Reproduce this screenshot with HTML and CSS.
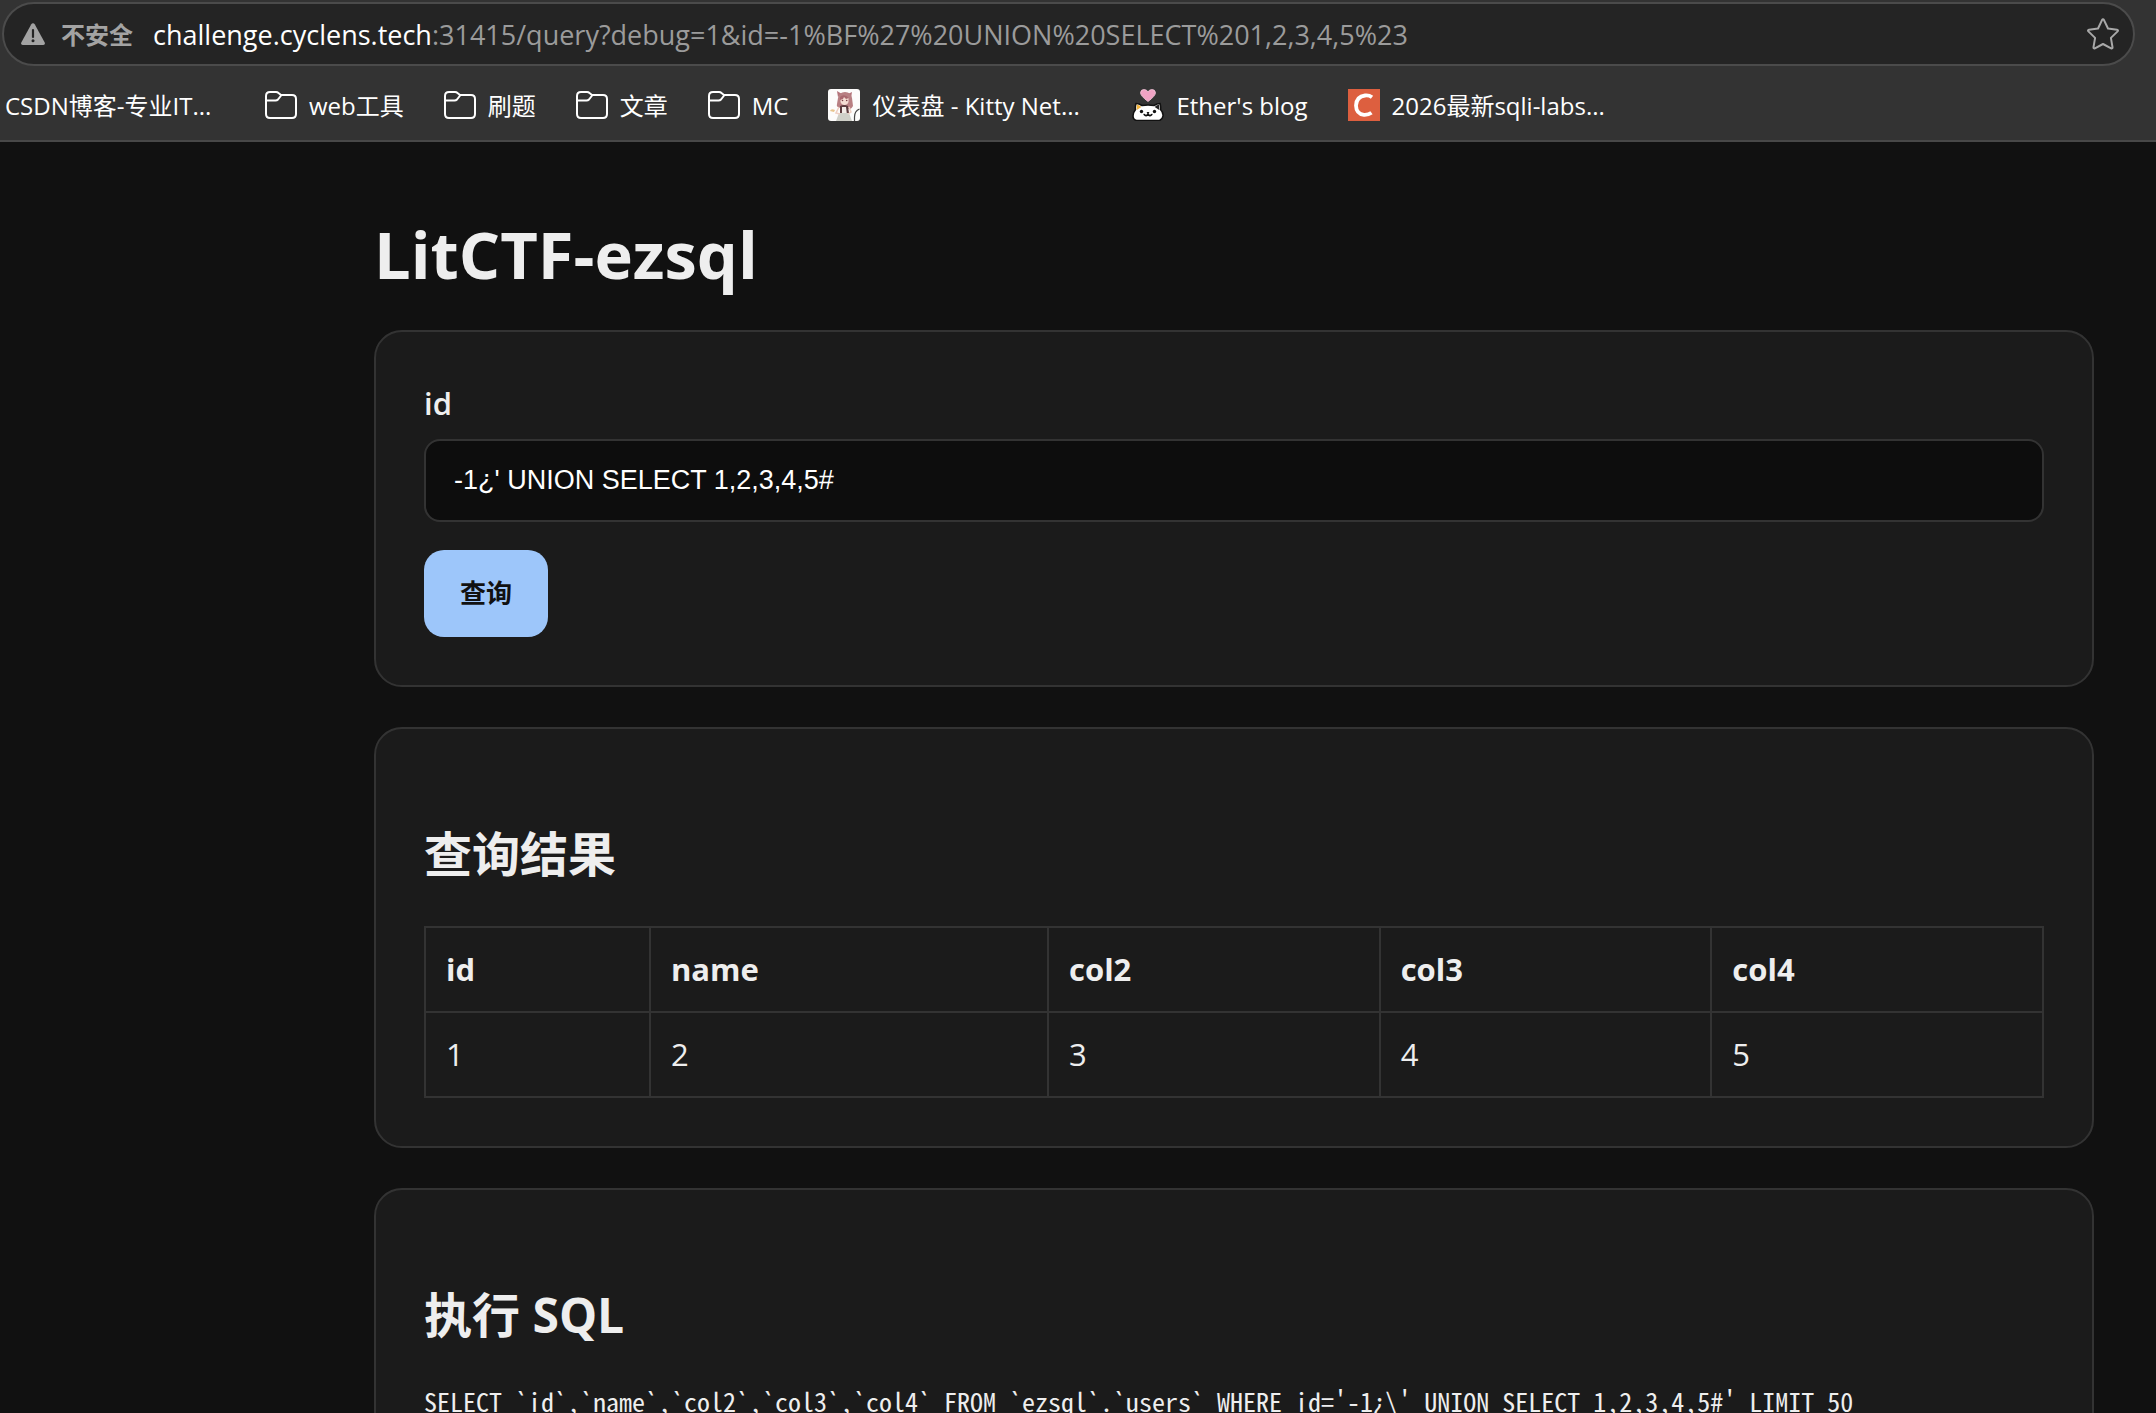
FILE: index.html
```html
<!DOCTYPE html>
<html lang="zh-CN">
<head>
  <meta charset="UTF-8" />
  <meta name="viewport" content="width=device-width, initial-scale=1.0"/>
  <title>LitCTF-ezsql</title>
  <link rel="stylesheet" href="styles.css">
</head>
<body>
  <header class="browser">
    <div class="omnibox">
      <button type="button" class="security">
        <svg class="warn" viewBox="0 0 24 22">
          <path d="M10.3 1.2a2 2 0 0 1 3.4 0l10 18.3a1.7 1.7 0 0 1-1.5 2.5H1.8a1.7 1.7 0 0 1-1.5-2.5z" fill="#a3a3a3"/>
          <path d="M12 7v7" stroke="#242424" stroke-width="2.2" stroke-linecap="round"/>
          <circle cx="12" cy="17.7" r="1.5" fill="#242424"/>
        </svg>
        <span>不安全</span>
      </button>
      <div class="url"><span class="host">challenge.cyclens.tech</span>:31415/query?debug=1&amp;id=-1%BF%27%20UNION%20SELECT%201,2,3,4,5%23</div>
      <button type="button" class="star" aria-label="收藏">
        <svg viewBox="0 0 32 32" fill="none" stroke="#a8a8a8" stroke-width="2" stroke-linejoin="round">
          <path d="M15 2.1q1-1.8 2 0l4 8.4 9 1.3q1.6.4.6 1.6l-6.700 6.500 1.600 9.300q.1 1.700-1.400 1.100L16 26l-8.100 4.300q-1.500.6-1.400-1.100l1.600-9.300-6.700-6.500q-1-1.200.6-1.600l9-1.300z"/>
        </svg>
      </button>
    </div>

    <nav class="bookmarks">
      <a href="#" class="bookmark"><span class="long">CSDN博客-专业IT...</span></a>
      <button type="button" class="bookmark">
        <svg class="icon" viewBox="0 0 32 32"><use href="#folder"/></svg>
        <span>web工具</span>
      </button>
      <button type="button" class="bookmark">
        <svg class="icon" viewBox="0 0 32 32"><use href="#folder"/></svg>
        <span>刷题</span>
      </button>
      <button type="button" class="bookmark">
        <svg class="icon" viewBox="0 0 32 32"><use href="#folder"/></svg>
        <span>文章</span>
      </button>
      <button type="button" class="bookmark">
        <svg class="icon" viewBox="0 0 32 32"><use href="#folder"/></svg>
        <span>MC</span>
      </button>
      <a href="#" class="bookmark">
        <svg class="icon" viewBox="0 0 32 32">
          <rect width="32" height="32" rx="3" fill="#fdfcfb"/>
          <path d="M10 8 9 2l5 3M20 5l4-2-1 6" fill="#b4737a"/>
          <path d="M10 9q1-6 7-6t7 6l1 8q-2 4-4 3l-9-1q-4-1-3-4z" fill="#b87f82"/>
          <path d="M12.500 9q4-3 8 0v4q-1 3-4 3t-4-3z" fill="#f5ddd3"/>
          <path d="M12 8q4-4 9 1l-3 1-2-2-1 2-3 1z" fill="#a9686e"/>
          <circle cx="14.500" cy="11.500" r=".8" fill="#7a3f45"/>
          <circle cx="18.700" cy="11.500" r=".8" fill="#7a3f45"/>
          <path d="M12 17q4-2 8 0l1 7-9 1z" fill="#5c3b3d"/>
          <path d="M14 18h4l1 8h-5z" fill="#f2ebe6"/>
          <path d="M11 24h10l3 8H8z" fill="#cfd0c8"/>
          <path d="m11 18-3 6 4 1M21 18l2 5-3 2" fill="none" stroke="#efcfc2" stroke-width="1.500"/>
          <path d="M2 22q1-3 5-1l-1 2z" fill="#e8c58e"/>
          <path d="M31.500 20q-5 2-5 8v4" fill="none" stroke="#444" stroke-width="1.200"/>
        </svg>
        <span class="long">仪表盘 - Kitty Net...</span>
      </a>
      <a href="#" class="bookmark">
        <svg class="icon" viewBox="0 0 32 32">
          <path d="M16 12.500Q8.500 7 8.500 3.600 9 .3 12.300.5 15 .7 16 3 17 .7 19.700.5q3.300-.2 3.800 3.100 0 3.400-7.500 8.900z" fill="#f0a3c4" stroke="#f7cadd" stroke-width=".8"/>
          <path d="M4 14.500q3 0 6 2 6-1 12 0 3-2 6-2 1 3 .5 6 3 3 2.500 6.500T27.500 31.500h-23Q1 30.500 1 27t2.500-6.500q-.5-3 .5-6z" fill="#fff" stroke="#111" stroke-width="1.600"/>
          <path d="M4.800 15.500q3 .5 4.500 2.500l-4.500 3z" fill="#f3b43c"/>
          <path d="M27.200 15.500q-3 .5-4.500 2.500l4.500 3z" fill="#222"/>
          <circle cx="9.500" cy="22.500" r="1.700" fill="#111"/>
          <circle cx="22.500" cy="22.500" r="1.700" fill="#111"/>
          <path d="M12.200 25.500q1.900 2.500 3.800-.5 1.900 3 3.800.5" fill="none" stroke="#111" stroke-width="1.600" stroke-linecap="round"/>
          <path d="M14.500 23h3L16 25z" fill="#111"/>
        </svg>
        <span>Ether's blog</span>
      </a>
      <a href="#" class="bookmark">
        <svg class="icon" viewBox="0 0 32 32">
          <rect width="32" height="32" fill="#dd5f3f"/>
          <path d="M24 8.300Q21 6 17 6.500 8.500 7.500 8 16.500q.2 8.500 8 9.300 4.500.2 7.500-2" fill="none" stroke="#fff" stroke-width="3.800"/>
        </svg>
        <span class="long">2026最新sqli-labs...</span>
      </a>
    </nav>
  </header>

  <main class="container">
    <h1>LitCTF-ezsql</h1>

    <form class="card" action="/query">
      <label for="id">id</label>
      <input type="text" id="id" name="id" value="-1¿' UNION SELECT 1,2,3,4,5#" />
      <button type="submit" class="btn">查询</button>
    </form>

    <section class="card">
      <h2>查询结果</h2>
      <table>
        <thead>
          <tr>
            <th class="col-id">id</th>
            <th class="col-name">name</th>
            <th>col2</th>
            <th>col3</th>
            <th>col4</th>
          </tr>
        </thead>
        <tbody>
          <tr>
            <td>1</td>
            <td>2</td>
            <td>3</td>
            <td>4</td>
            <td>5</td>
          </tr>
        </tbody>
      </table>
    </section>

    <section class="card">
      <h2>执行 SQL</h2>
      <pre>SELECT `id`,`name`,`col2`,`col3`,`col4` FROM `ezsql`.`users` WHERE id='-1¿\' UNION SELECT 1,2,3,4,5#' LIMIT 50</pre>
    </section>
  </main>

  <svg class="defs" aria-hidden="true">
    <symbol id="folder" viewBox="0 0 32 32">
      <path d="M1 25V7q0-4 4-4h6q1.500 0 2.500 1l2.500 2H27q4 0 4 4v15q0 4-4 4H5q-4 0-4-4zM1 11.500h9.500q1.500 0 2.500-1L16.500 6" fill="none" stroke="#fff" stroke-width="2" stroke-linejoin="round"/>
    </symbol>
  </svg>
</body>
</html>
```

FILE: styles.css
```css
* {
  box-sizing: border-box;
  margin: 0;
  padding: 0;
}

body {
  height: 100vh;
  overflow: hidden;
  background: #111;
  color: #eee;
  font-family: 'Open Sans', 'Noto Sans CJK SC', sans-serif;
  font-size: 31px;
  line-height: 47px;
}

button {
  border: none;
  background: none;
  color: inherit;
  font: inherit;
  cursor: pointer;
}

/* browser bar */
.browser {
  background: #333;
  border-bottom: 2px solid #484848;
  padding-top: 2px;
}

.omnibox {
  display: flex;
  align-items: center;
  height: 64px;
  margin: 0 21px 0 2px;
  padding: 0 14px 0 17px;
  background: #242424;
  border: 2px solid #4b4b4b;
  border-radius: 32px;
}

.security {
  display: flex;
  align-items: center;
  gap: 16px;
  margin-right: 20px;
  color: #a3a3a3;
  font-size: 24px;
  font-weight: bold;
}

.warn {
  width: 24px;
  height: 22px;
}

.url {
  flex: 1;
  color: #9b9b9b;
  font-size: 27px;
  white-space: nowrap;
}

.host {
  color: #fff;
}

.star,
.star svg {
  display: block;
  width: 32px;
  height: 32px;
}

.bookmarks {
  display: flex;
  align-items: center;
  gap: 40px;
  height: 74px;
  padding: 4px 5px 0;
}

.bookmark {
  display: flex;
  align-items: center;
  gap: 12px;
  color: #fff;
  font-size: 24px;
  text-decoration: none;
  white-space: nowrap;
}

.long {
  width: 220px;
}

.icon {
  width: 32px;
  height: 32px;
}

.defs {
  display: none;
}

/* page */
.container {
  margin: 0 62px 0 374px;
  padding-top: 66px;
}

h1 {
  margin-bottom: 30px;
  font-size: 65px;
  line-height: 92px;
}

.card {
  margin-bottom: 40px;
  padding: 48px;
  background: #1b1b1b;
  border: 2px solid #333;
  border-radius: 28px;
}

label {
  display: block;
  margin-bottom: 12px;
  font-weight: 600;
}

input {
  display: block;
  width: 100%;
  height: 83px;
  margin-bottom: 28px;
  padding: 0 28px;
  background: #0d0d0d;
  border: 2px solid #333;
  border-radius: 16px;
  color: #fff;
  font-family: 'Liberation Sans', Arial, sans-serif;
  font-size: 27px;
}

.btn {
  display: block;
  padding: 20px 36px;
  background: #9dc6fa;
  border-radius: 20px;
  color: #111;
  font-size: 26px;
  font-weight: bold;
}

h2 {
  margin: 42px 0 37px;
  font-size: 48px;
  line-height: 70px;
}

table {
  width: 100%;
  table-layout: fixed;
  border-collapse: collapse;
}

th,
td {
  padding: 18px 20px;
  border: 2px solid #333;
  text-align: left;
}

.col-id {
  width: 225px;
}

.col-name {
  width: 398px;
}

pre {
  font-family: 'Noto Sans Mono CJK SC', 'Liberation Mono', monospace;
  font-size: 26px;
  line-height: 28px;
}
```
